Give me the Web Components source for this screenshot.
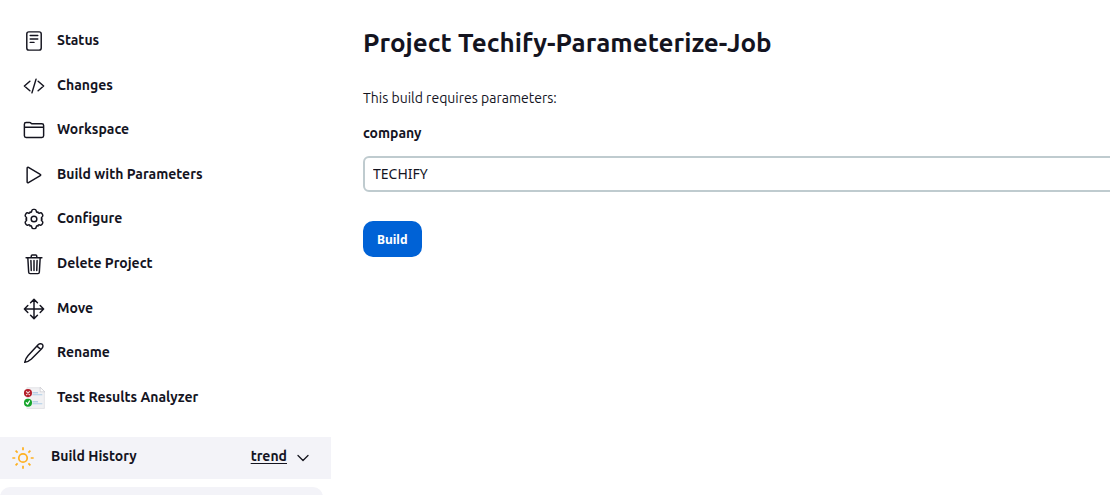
<!DOCTYPE html>
<html lang="en">
<head>
<meta charset="utf-8">
<meta name="viewport" content="width=device-width, initial-scale=1">
<title>Techify-Parameterize-Job</title>
<style>
  body { margin: 0; background: #fff; color: #14141f; font: 14px/20px Ubuntu, "Noto Sans", sans-serif; }
</style>
</head>
<body>
<job-page>
  <side-panel slot="side">
    <task-link icon="status">Status</task-link>
    <task-link icon="changes">Changes</task-link>
    <task-link icon="workspace">Workspace</task-link>
    <task-link icon="build">Build with Parameters</task-link>
    <task-link icon="configure">Configure</task-link>
    <task-link icon="delete">Delete Project</task-link>
    <task-link icon="move">Move</task-link>
    <task-link icon="rename">Rename</task-link>
    <task-link icon="analyzer">Test Results Analyzer</task-link>
    <build-history slot="history">Build History</build-history>
  </side-panel>
  <build-form>
    <span slot="title">Project Techify-Parameterize-Job</span>
    <span slot="intro">This build requires parameters:</span>
  </build-form>
</job-page>
<script>
const icons = {
  status: '<rect x="88" y="44" width="336" height="424" rx="50"/><path d="M168 128h176M168 208h176M168 288h88"/>',
  changes: '<path d="M160 368L32 256l128-112M352 368l128-112-128-112M304 96l-96 320"/>',
  workspace: '<path d="M440 432H72a40 40 0 01-40-40V120a40 40 0 0140-40h75.89a40 40 0 0122.19 6.72l27.84 18.56a40 40 0 0022.19 6.72H440a40 40 0 0140 40v240a40 40 0 01-40 40zM32 192h448"/>',
  build: '<path d="M96 96v320c0 17 17 28 31 20l275-163c13-7 13-27 0-34L127 76c-14-8-31 3-31 20z"/>',
  configure: '<circle cx="256" cy="256" r="66"/><path id="tooth" d="M164 97C188 108 198 92 203 70Q211 32 240 32H272Q301 32 309 70C314 92 324 108 348 97"/><use href="#tooth" transform="rotate(60 256 256)"/><use href="#tooth" transform="rotate(120 256 256)"/><use href="#tooth" transform="rotate(180 256 256)"/><use href="#tooth" transform="rotate(240 256 256)"/><use href="#tooth" transform="rotate(300 256 256)"/>',
  delete: '<path d="M112 112l20 336c1 18 14 32 32 32h184c18 0 31-14 32-32l20-336M72 112h368M192 112V72a24 24 0 0124-24h80a24 24 0 0124 24v40M256 176v232M184 176l8 232M328 176l-8 232"/>',
  move: '<path d="M176 112l80-80 80 80M256 32v448M176 400l80 80 80-80M400 176l80 80-80 80M112 176l-80 80 80 80M32 256h448"/>',
  rename: '<path d="M346 70c30-34 74-42 102-16s20 72-14 104L196 394q-68 62-156 78q18-88 80-156zM324 96l92 80"/>',
  analyzer: '<g stroke="none"><path d="M100 16h300l98 96v388H100z" fill="#f1f1f3" stroke="#d2d2d8" stroke-width="12"/><path d="M400 16v96h98z" fill="#fff" stroke="#b9b9c0" stroke-width="12"/><path d="M230 135h110M230 345h110" stroke="#8fb8dc" stroke-width="20"/><path d="M230 180h210M230 390h210" stroke="#a9cbe6" stroke-width="22"/><circle cx="116" cy="142" r="94" fill="#b51f2b"/><path d="M82 108l68 68M150 108l-68 68" stroke="#f3dada" stroke-width="28"/><circle cx="116" cy="366" r="94" fill="#16a52c"/><path d="M76 366l32 34 44-74" stroke="#fff" stroke-width="30"/></g>',
  sun: '<circle cx="256" cy="256" r="98"/><path d="M256 8v68M256 436v68M428 84l-46 46M130 382l-46 46M504 256h-68M76 256H8M428 428l-46-46M130 130L84 84" stroke-linecap="butt"/>',
  chevron: '<path d="M96 176l160 160 160-160"/>'
};
const define = (name, html, setup) => {
  const template = document.createElement('template');
  template.innerHTML = html;
  customElements.define(name, class extends HTMLElement {
    constructor() {
      super();
      this.attachShadow({ mode: 'open' }).append(template.content.cloneNode(true));
    }
    connectedCallback() { if (setup) setup(this, this.shadowRoot); }
  });
};

define('line-icon', `<style>
  :host { display: block; flex: none; width: 22px; height: 22px; }
  svg { display: block; width: 100%; height: 100%; overflow: visible; fill: none; stroke: currentColor; stroke-width: var(--stroke, 34px); stroke-linecap: round; stroke-linejoin: round; }
</style><svg viewBox="0 0 512 512" aria-hidden="true"></svg>`,
  (el, root) => { root.querySelector('svg').innerHTML = icons[el.getAttribute('name')]; });

define('task-link', `<style>
  :host { display: flex; align-items: center; }
  a { display: flex; align-items: center; gap: 12px; color: inherit; text-decoration: none; font-weight: 600; }
  line-icon { margin-top: 2px; }
</style><a href="#"><line-icon></line-icon><span><slot></slot></span></a>`,
  (el, root) => {
    const icon = document.createElement('line-icon');
    icon.setAttribute('name', el.getAttribute('icon'));
    root.querySelector('line-icon').replaceWith(icon);
  });

define('build-history', `<style>
  :host { display: flex; flex: 1; flex-direction: column; gap: 8px; }
  header { display: flex; align-items: center; height: 42px; padding: 0 20px 0 12px; box-sizing: border-box; background: #f3f3f8; font-weight: 700; }
  .sun { color: #feb020; --stroke: 40px; }
  h2 { flex: 1; margin: 0 0 4px 17px; font-size: 14px; line-height: 20px; }
  a { margin: 0 8px 4px 0; color: inherit; text-underline-offset: 2px; }
  button { width: 16px; height: 16px; padding: 0; border: 0; background: none; color: inherit; }
  button line-icon { width: 16px; height: 16px; --stroke: 42px; }
  .filter { flex: 1; min-height: 40px; margin-right: 8px; border-radius: 10px 10px 0 0; background: #f3f3f8; }
</style><header><line-icon class="sun" name="sun"></line-icon><h2><slot></slot></h2><a href="#">trend</a><button type="button" aria-label="Collapse"><line-icon name="chevron"></line-icon></button></header><div class="filter"></div>`);

define('side-panel', `<style>
  :host { display: flex; flex-direction: column; gap: 18px; height: 100%; }
  nav { display: grid; grid-auto-rows: 1fr; height: 401px; padding: 18px 16px 0 23px; }
</style><nav><slot></slot></nav><slot name="history"></slot>`);

define('build-form', `<style>
  :host { display: block; padding: 26px 0 0 32px; }
  h1 { margin: 0 0 28px; font-size: 26px; line-height: 34px; font-weight: 700; }
  p { margin: 0 0 15px; }
  label { display: block; margin-bottom: 13px; font-weight: 600; }
  input { display: block; box-sizing: border-box; width: calc(100% + 16px); height: 36px; margin-bottom: 29px; padding: 0 8px 2px; border: 2px solid #bfcbcf; border-radius: 6px; background: #fff; color: inherit; font: 14px "Noto Sans", sans-serif; }
  button { height: 36px; padding: 0 14px; border: 0; border-radius: 10px; background: #0062d6; color: #fff; font: 700 12px "Noto Sans", sans-serif; }
</style><h1><slot name="title"></slot></h1><p><slot name="intro"></slot></p><form><label for="company">company</label><input id="company" type="text" value="TECHIFY"><button type="button">Build</button></form>`);

define('job-page', `<style>
  :host { display: grid; grid-template-columns: 331px minmax(0, 1fr); height: 100vh; overflow: hidden; }
  aside, main { min-width: 0; }
</style><aside><slot name="side"></slot></aside><main><slot></slot></main>`);
</script>
</body>
</html>
